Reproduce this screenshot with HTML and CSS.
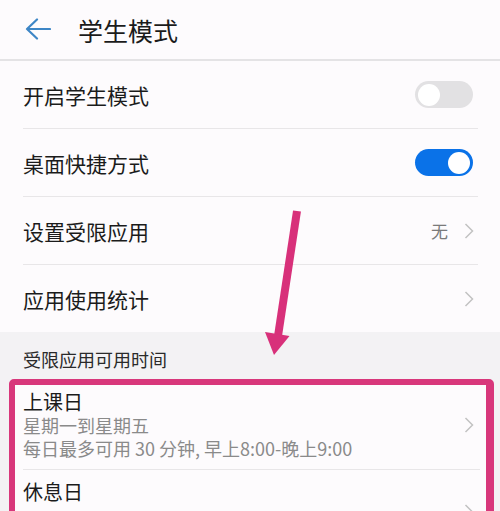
FILE: index.html
```html
<!DOCTYPE html>
<html lang="zh">
<head>
<meta charset="utf-8">
<link rel="stylesheet" href="styles.css">
</head>
<body>
<div class="page">
  <div class="header">
    <svg class="back" width="26" height="22" viewBox="0 0 26 22"><path d="M25 11 H2 M12 1.5 L2 11 L12 20.5" fill="none" stroke="#3d86c6" stroke-width="2.2" stroke-linecap="round" stroke-linejoin="round"/></svg>
    <span class="title">学生模式</span>
  </div>
  <div class="list">
    <div class="row">
      <span class="label">开启学生模式</span>
      <span class="toggle off"><span class="knob"></span></span>
    </div>
    <div class="row">
      <span class="label">桌面快捷方式</span>
      <span class="toggle on"><span class="knob"></span></span>
    </div>
    <div class="row">
      <span class="label">设置受限应用</span>
      <span class="right"><span class="value">无</span><svg class="chev" width="10" height="16" viewBox="0 0 10 16"><path d="M1.5 1 L8.5 8 L1.5 15" fill="none" stroke="#c2c2c2" stroke-width="1.5"/></svg></span>
    </div>
    <div class="row last">
      <span class="label">应用使用统计</span>
      <span class="right"><svg class="chev" width="10" height="16" viewBox="0 0 10 16"><path d="M1.5 1 L8.5 8 L1.5 15" fill="none" stroke="#c2c2c2" stroke-width="1.5"/></svg></span>
    </div>
  </div>
  <div class="section">
    <div class="section-title">受限应用可用时间</div>
    <div class="box">
      <div class="item first">
        <div class="item-text">
          <div class="item-title">上课日</div>
          <div class="item-sub">星期一到星期五</div>
          <div class="item-sub">每日最多可用 30 分钟, 早上8:00-晚上9:00</div>
        </div>
        <svg class="chev" width="10" height="16" viewBox="0 0 10 16"><path d="M1.5 1 L8.5 8 L1.5 15" fill="none" stroke="#c2c2c2" stroke-width="1.5"/></svg>
      </div>
      <div class="item second">
        <div class="item-text">
          <div class="item-title">休息日</div>
        </div>
        <svg class="chev low" width="10" height="16" viewBox="0 0 10 16"><path d="M1.5 1 L8.5 8 L1.5 15" fill="none" stroke="#c2c2c2" stroke-width="1.5"/></svg>
      </div>
    </div>
  </div>
  <svg class="annot" width="500" height="511" viewBox="0 0 500 511">
    <line x1="297" y1="211" x2="278" y2="336" stroke="#d8307a" stroke-width="8"/>
    <polygon points="265,332 289.5,336 274,355" fill="#d8307a"/>
  </svg>
</div>
</body>
</html>
```

FILE: styles.css
```css
html, body {
  margin: 0;
  padding: 0;
  background: #fdfbfd;
  overflow: hidden;
}
body {
  font-family: "Noto Sans CJK SC", "Noto Sans", sans-serif;
  color: #1b1b1b;
}
.page {
  position: relative;
  width: 500px;
  height: 511px;
  overflow: hidden;
}
.header {
  height: 59px;
  display: flex;
  align-items: center;
  padding-left: 25px;
  border-bottom: 2px solid #e4e3e5;
}
.back {
  display: block;
  margin-top: -2px;
}
.title {
  margin-left: 27px;
  font-size: 25px;
  line-height: 30px;
  color: #1b1b1b;
}
.list {
  padding: 0 22px 0 23px;
}
.row {
  height: 67px;
  display: flex;
  align-items: center;
  justify-content: space-between;
  border-bottom: 1px solid #e8e6e8;
}
.row.last {
  border-bottom: none;
}
.label {
  font-size: 21px;
  line-height: 28px;
  padding-top: 0;
}
.toggle {
  position: relative;
  width: 58px;
  height: 27px;
  border-radius: 14px;
  margin-right: 5px;
}
.toggle.off {
  background: #e2e1e3;
}
.toggle.on {
  background: #0a72e8;
}
.knob {
  position: absolute;
  top: 2.5px;
  width: 22px;
  height: 22px;
  border-radius: 50%;
  background: #ffffff;
}
.toggle.off .knob {
  left: 3px;
}
.toggle.on .knob {
  right: 3px;
}
.right {
  display: flex;
  align-items: center;
  margin-right: 4px;
}
.value {
  font-size: 17px;
  line-height: 22px;
  color: #7a7a7a;
  margin-right: 16px;
}
.chev {
  display: block;
}
.section {
  background: #f3f2f4;
  padding-top: 15px;
  height: 200px;
}
.section-title {
  padding-left: 23px;
  font-size: 18px;
  line-height: 24px;
  color: #2a2a2a;
}
.box {
  margin: 8px 6px 0 9px;
  border: 6px solid #d8377b;
  border-right-width: 8px;
  border-radius: 5px;
  background: #fdfbfd;
  height: 200px;
}
.item {
  display: flex;
  align-items: center;
  justify-content: space-between;
  margin: 0 6px 0 8px;
  padding-right: 6px;
}
.item.first {
  padding-top: 5px;
  padding-bottom: 9px;
  border-bottom: 1px solid #e8e6e8;
}
.item.second {
  padding-top: 10px;
  align-items: flex-start;
}
.item-title {
  font-size: 20px;
  line-height: 24px;
  color: #1b1b1b;
}
.item-sub {
  font-size: 18px;
  line-height: 23px;
  color: #8a8a8a;
}
.chev.low {
  margin-top: 24px;
}
.annot {
  position: absolute;
  left: 0;
  top: 0;
  pointer-events: none;
}
```
